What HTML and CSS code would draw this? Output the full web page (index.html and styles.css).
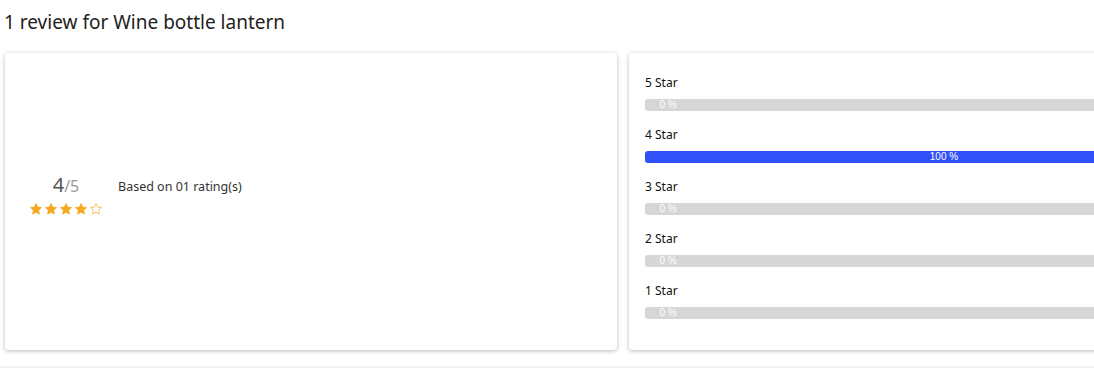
FILE: index.html
```html
<!DOCTYPE html>
<html lang="en">

<head>
    <meta charset="UTF-8">
    <meta name="viewport" content="width=device-width, initial-scale=1.0">
    <title>Reviews</title>
    <link rel="stylesheet" href="styles.css">
</head>

<body>
    <section class="reviews">
        <h2 class="reviews-title">1 review for Wine bottle lantern</h2>

        <div class="reviews-row">
            <div class="card card-summary">
                <div class="summary">
                    <div class="score">
                        <div class="score-value">4<span class="score-max">/5</span></div>
                        <div class="stars">
                            <svg viewBox="0 0 24 24" class="star"><path d="M12 2.5l2.9 6.2 6.7.8-5 4.6 1.3 6.7L12 17.5l-5.9 3.3 1.3-6.7-5-4.6 6.7-.8z"/></svg>
                            <svg viewBox="0 0 24 24" class="star"><path d="M12 2.5l2.9 6.2 6.7.8-5 4.6 1.3 6.7L12 17.5l-5.9 3.3 1.3-6.7-5-4.6 6.7-.8z"/></svg>
                            <svg viewBox="0 0 24 24" class="star"><path d="M12 2.5l2.9 6.2 6.7.8-5 4.6 1.3 6.7L12 17.5l-5.9 3.3 1.3-6.7-5-4.6 6.7-.8z"/></svg>
                            <svg viewBox="0 0 24 24" class="star"><path d="M12 2.5l2.9 6.2 6.7.8-5 4.6 1.3 6.7L12 17.5l-5.9 3.3 1.3-6.7-5-4.6 6.7-.8z"/></svg>
                            <svg viewBox="0 0 24 24" class="star star-empty"><path d="M12 2.5l2.9 6.2 6.7.8-5 4.6 1.3 6.7L12 17.5l-5.9 3.3 1.3-6.7-5-4.6 6.7-.8z"/></svg>
                        </div>
                    </div>
                    <p class="based-on">Based on 01 rating(s)</p>
                </div>
            </div>

            <div class="card card-bars">
                <div class="bar-row">
                    <div class="bar-label">5 Star</div>
                    <div class="bar"><span class="bar-text">0 %</span></div>
                </div>
                <div class="bar-row">
                    <div class="bar-label">4 Star</div>
                    <div class="bar"><span class="bar-fill" style="width: 100%">100 %</span></div>
                </div>
                <div class="bar-row">
                    <div class="bar-label">3 Star</div>
                    <div class="bar"><span class="bar-text">0 %</span></div>
                </div>
                <div class="bar-row">
                    <div class="bar-label">2 Star</div>
                    <div class="bar"><span class="bar-text">0 %</span></div>
                </div>
                <div class="bar-row">
                    <div class="bar-label">1 Star</div>
                    <div class="bar"><span class="bar-text">0 %</span></div>
                </div>
            </div>
        </div>
    </section>
</body>

</html>
```

FILE: styles.css
```css
body {
    font-family: "Noto Sans", "Liberation Sans", sans-serif;
    color: #222;
    background-color: #fff;
    margin: 0;
    overflow: hidden;
}

.reviews {
    width: 1262px;
    padding: 0 0 0 4px;
    border-bottom: 2px solid #f4f4f4;
}

.reviews-title {
    font-size: 19px;
    font-weight: 400;
    line-height: 24px;
    margin: 0;
    padding: 10px 0 19px;
    color: #222;
}

.reviews-row {
    display: flex;
    gap: 12px;
    padding: 0 0 16px 1px;
}

.card {
    background-color: #fff;
    border-radius: 4px;
    box-shadow: 0 1px 4px rgba(0, 0, 0, 0.28);
    box-sizing: border-box;
}

.card-summary {
    width: 612px;
    height: 297px;
    display: flex;
    align-items: center;
    padding: 0 0 12px 23px;
}

.summary {
    display: flex;
    align-items: flex-start;
}

.score {
    width: 76px;
    text-align: center;
}

.score-value {
    font-size: 20px;
    line-height: 20px;
    color: #555;
}

.score-max {
    font-size: 16px;
    color: #999;
}

.stars {
    display: flex;
    justify-content: center;
    gap: 1px;
    margin-top: 6px;
}

.star {
    width: 14px;
    height: 14px;
    fill: #f6a821;
    stroke: #f6a821;
    stroke-width: 1.2;
    stroke-linejoin: round;
}

.star-empty {
    fill: none;
}

.based-on {
    font-size: 12.5px;
    line-height: 16px;
    color: #333;
    margin: 4px 0 0 14px;
}

.card-bars {
    width: 630px;
    height: 297px;
    padding: 22px 16px 0;
}

.bar-row {
    margin-bottom: 16px;
}

.bar-label {
    font-size: 12px;
    line-height: 16px;
    color: #111;
    margin-bottom: 8px;
}

.bar {
    height: 12px;
    border-radius: 3px;
    background-color: #d6d6d6;
    overflow: hidden;
    display: flex;
    font-family: "Liberation Sans", Arial, sans-serif;
    font-size: 10px;
    line-height: 12px;
    color: #fff;
}

.bar-text {
    width: 46px;
    text-align: center;
}

.bar-fill {
    background-color: #3050f8;
    text-align: center;
}
```
